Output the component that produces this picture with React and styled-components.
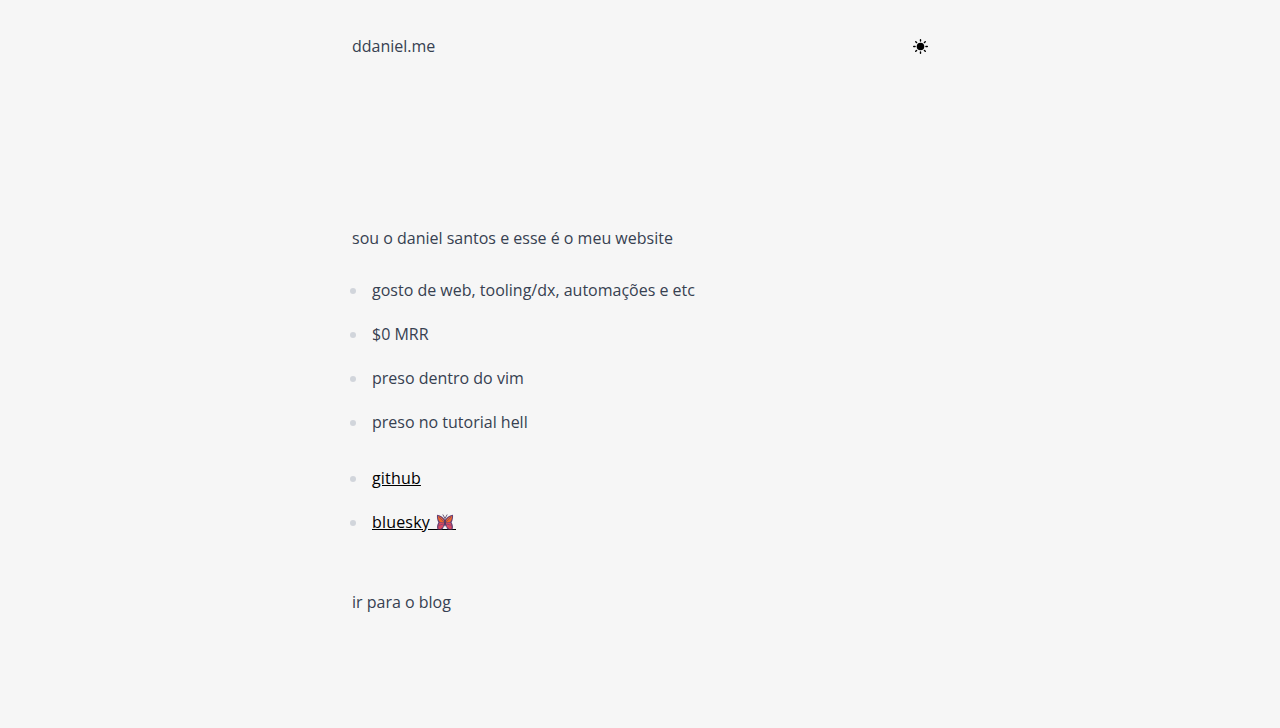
import React from 'react';
import styled, { createGlobalStyle } from 'styled-components';

const GlobalStyle = createGlobalStyle`
  *, *::before, *::after { box-sizing: border-box; }
  body {
    margin: 0;
    background: #f6f6f6;
    color: #374151;
    font-family: "Open Sans", sans-serif;
    font-size: 16px;
    line-height: 28px;
  }
`;

const Page = styled.div`
  width: 576px;
  margin: 0 auto;
  padding-top: 32px;
`;

const Header = styled.header`
  display: flex;
  align-items: center;
  justify-content: space-between;
  height: 28px;
`;

const NavLink = styled.a`
  color: inherit;
  text-decoration: none;
`;

const ThemeButton = styled.button`
  display: flex;
  padding: 1px 0 0;
  border: 0;
  background: none;
  color: #000;
`;

const Main = styled.main`
  padding-top: 164px;
`;

const Intro = styled.p`
  margin: 0;
`;

const List = styled.ul`
  display: flex;
  flex-direction: column;
  gap: 16px;
  margin: ${(p) => p.$top}px 0 0;
  padding: 0 0 0 16px;
`;

const Item = styled.li`
  height: 28px;
  padding-left: 4px;

  &::marker { color: #d1d5db; }
`;

const Link = styled.a`
  color: #000;
  font-weight: 500;
  letter-spacing: 0.18px;
  text-decoration: underline;
`;

const Butterfly = styled.svg`
  width: 22px;
  height: 18px;
  vertical-align: -3px;
`;

const Footer = styled.footer`
  margin-top: 52px;
`;

const SunIcon = () => (
  <svg width="15" height="15" viewBox="0 0 15 15" fill="none" stroke="currentColor" strokeWidth="1.4" strokeLinecap="round">
    <circle cx="7.5" cy="7.5" r="3.8" fill="currentColor" stroke="none" />
    <path d="M7.5.7v1.4M7.5 12.9v1.4M.7 7.5h1.4M12.9 7.5h1.4M2.7 2.7l.9.9M11.4 11.4l.9.9M2.7 12.3l.9-.9M11.4 3.6l.9-.9" />
  </svg>
);

const ButterflyIcon = () => (
  <Butterfly viewBox="0 0 22 18" aria-label="borboleta">
    <path d="M0 16.500h22" stroke="#000" />
    <path d="M11 7C9 4 6 1.800 3 1.800c-.3 2.800.2 5.400 1.400 7.600-1.400 2.200-1.800 4.800-.9 7.100h4.700c.9-.8 1.400-1.900 1.700-3.200L11 12l1.100 1.300c.3 1.300.8 2.400 1.700 3.200h4.700c.9-2.300.5-4.900-.9-7.100 1.200-2.200 1.700-4.800 1.400-7.600-3 0-6 2.200-8 5.200z" fill="#664174" />
    <path d="M4 3C6.500 3.600 9 5.400 10.200 8.300L10 9.500 6 9.200C4.500 7.500 3.900 5.200 4 3zM18 3c-2.500.6-5 2.400-6.200 5.300l.2 1.200 4-.3c1.500-1.700 2.100-4 2-6.200z" fill="#ef652b" />
    <path d="M5.500 9.800l4.500.3-1.200 4-2.100 1.900H4.600c-.5-2-.2-4.400.9-6.200zM16.500 9.800l-4.500.3 1.200 4 2.100 1.900h2.100c.5-2 .2-4.400-.9-6.200z" fill="#dc4960" />
    <path d="M5 4l5 5M17 4l-5 5M4.500 12.500l4.500-1.500M17.500 12.500l-4.500-1.500" stroke="#664174" strokeWidth=".6" />
    <path d="M11 5.500v8M11 5.500L8.800 1.500M11 5.500l2.200-4" stroke="#493154" strokeWidth=".8" fill="none" />
  </Butterfly>
);

export default function App() {
  return (
    <>
      <GlobalStyle />
      <Page>
        <Header>
          <NavLink>ddaniel.me</NavLink>
          <ThemeButton aria-label="tema"><SunIcon /></ThemeButton>
        </Header>
        <Main>
          <Intro>sou o daniel santos e esse é o meu website</Intro>
          <List $top={24}>
            <Item>gosto de web, tooling/dx, automações e etc</Item>
            <Item>$0 MRR</Item>
            <Item>preso dentro do vim</Item>
            <Item>preso no tutorial hell</Item>
          </List>
          <List $top={28}>
            <Item><Link>github</Link></Item>
            <Item><Link>bluesky <ButterflyIcon /></Link></Item>
          </List>
        </Main>
        <Footer><NavLink>ir para o blog</NavLink></Footer>
      </Page>
    </>
  );
}
